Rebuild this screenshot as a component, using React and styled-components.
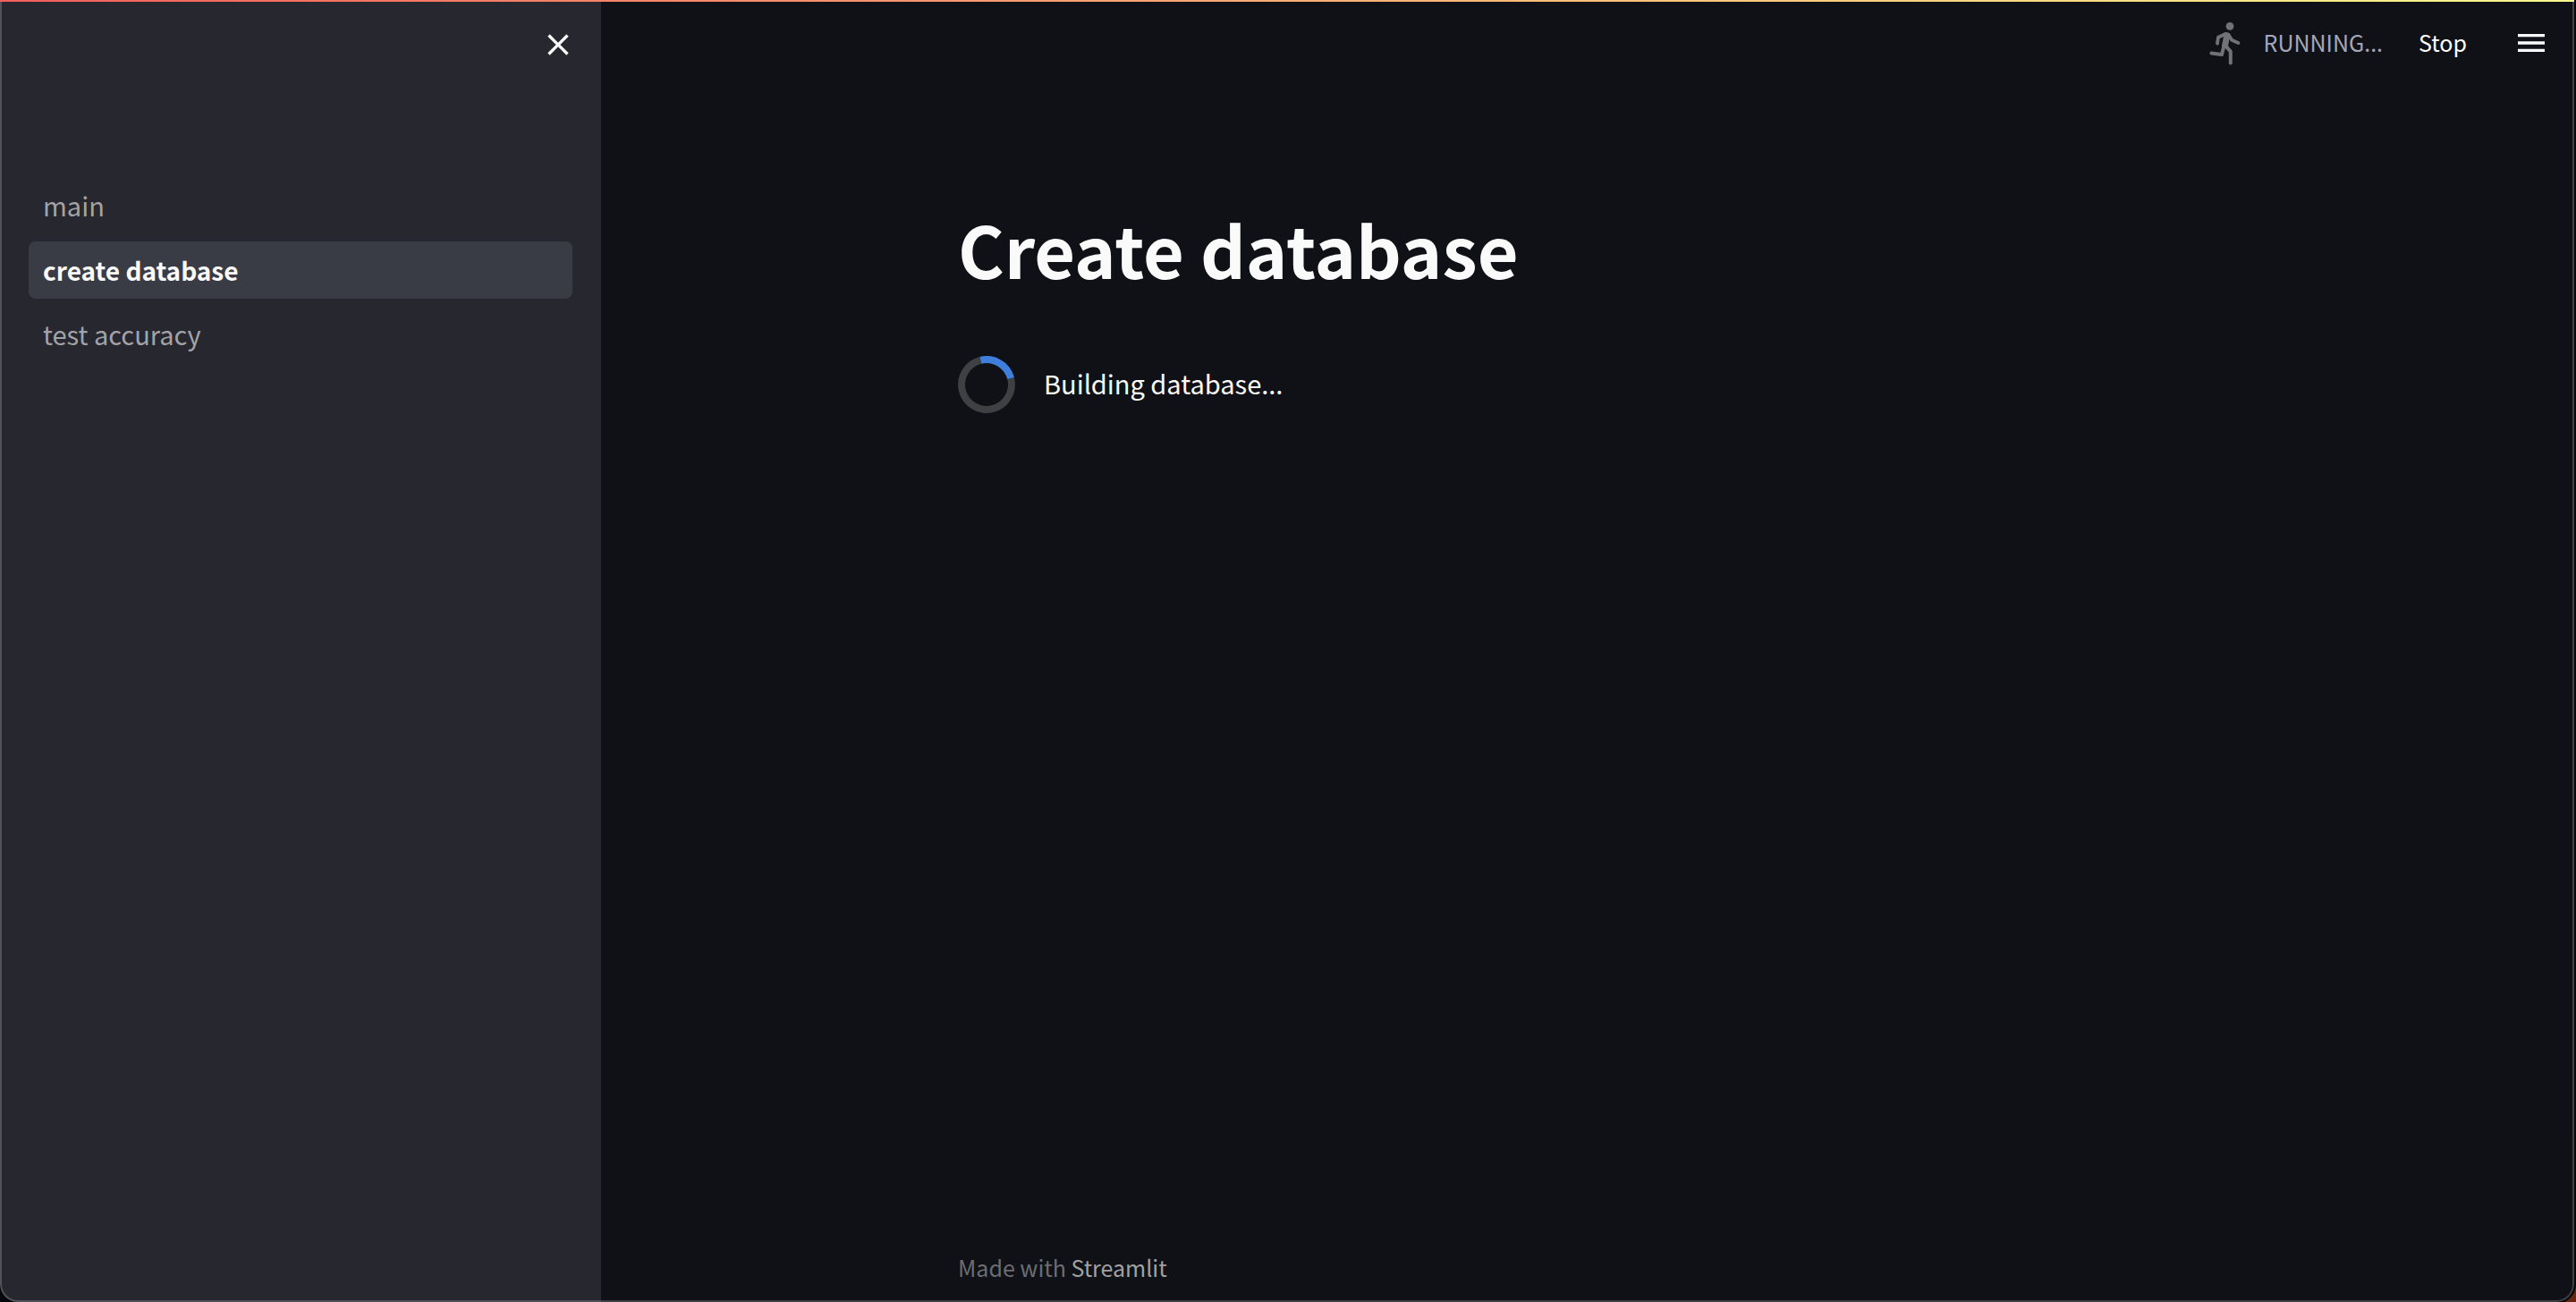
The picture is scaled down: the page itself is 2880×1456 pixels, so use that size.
import React from "react";
import styled, { createGlobalStyle, css } from "styled-components";

const sans = `"Noto Sans CJK SC", "Noto Sans", sans-serif`;

const GlobalStyle = createGlobalStyle`
  *, *::before, *::after { box-sizing: border-box; }
  body { margin: 0; background: #05070a; font-family: ${sans}; color: #fafafa; }
  button { font: inherit; color: inherit; background: none; border: 0; padding: 0; cursor: pointer; }
  a { color: inherit; text-decoration: none; }
`;

const Desktop = styled.div`
  height: 100vh;
  padding-right: 2px;
  overflow: hidden;
  background: linear-gradient(90deg, #05080f 50%, #6a2413 50%);
`;

const Window = styled.div`
  position: relative;
  display: flex;
  height: 100%;
  overflow: hidden;
  border-radius: 0 0 20px 20px;
  background: #0f1116;
  box-shadow: 0 0 0 2px #060608;

  &::after {
    content: "";
    position: absolute;
    inset: 0;
    border: solid rgba(255, 255, 255, 0.2);
    border-width: 0 2px 2px;
    border-radius: inherit;
    pointer-events: none;
  }
`;

const Decoration = styled.div`
  position: absolute;
  z-index: 1;
  inset: 0 0 auto;
  height: 2px;
  background: linear-gradient(90deg, #f35f5c, #fbfa8c);
`;

const Sidebar = styled.aside`
  flex: 0 0 672px;
  background: #272730;
`;

const SidebarHeader = styled.div`
  display: flex;
  justify-content: flex-end;
  height: 198px;
  padding: 30px 28px;
`;

const IconButton = styled.button`
  display: flex;
  width: 40px;
  height: 40px;
`;

const Icon = styled.svg`
  width: 40px;
  height: 40px;
  fill: currentColor;
`;

const NavList = styled.ul`
  display: flex;
  flex-direction: column;
  gap: 8px;
  margin: 0;
  padding: 0 32px;
  list-style: none;
`;

const NavLink = styled.a`
  display: flex;
  align-items: center;
  height: 64px;
  padding: 0 16px 2px;
  border-radius: 8px;
  font-size: 29px;
  color: #a3a3a6;
  ${(p) =>
    p.$active &&
    css`
      padding-bottom: 0;
      background: #3a3c45;
      color: #fafafa;
      font-size: 28px;
      font-weight: 700;
    `}
`;

const Content = styled.div`
  flex: 1;
  display: flex;
  flex-direction: column;
`;

const Header = styled.header`
  display: flex;
  align-items: center;
  justify-content: flex-end;
  height: 96px;
  padding: 0 28px;
`;

const Runner = styled.svg`
  width: 44px;
  height: 56px;
  margin-right: 22px;
  fill: none;
  stroke: #717275;
  stroke-linecap: round;
  stroke-linejoin: round;
`;

const Status = styled.span`
  margin-right: 40px;
  padding-bottom: 2px;
  font-size: 25px;
  color: #a5a7b9;
`;

const StopButton = styled.button`
  margin-right: 52px;
  padding-bottom: 2px;
  font-size: 25px;
  color: #ffffff;
`;

const Main = styled.main`
  flex: 1;
  width: 1408px;
  max-width: 100%;
  margin: 0 auto;
  padding-top: 130px;
`;

const Title = styled.h1`
  margin: 0;
  font-size: 79px;
  font-weight: 700;
  line-height: 104px;
`;

const Loading = styled.div`
  display: flex;
  align-items: center;
  gap: 32px;
  margin-top: 68px;
  font-size: 29px;
  line-height: 60px;
`;

const Message = styled.span`
  padding-bottom: 4px;
`;

const Spinner = styled.div`
  width: 64px;
  height: 64px;
  border: 8px solid #3f4044;
  border-top-color: #3d7fdb;
  border-radius: 50%;
  transform: rotate(31deg);
`;

const Footer = styled.footer`
  width: 1408px;
  max-width: 100%;
  margin: 0 auto;
  padding-bottom: 19px;
  font-size: 25px;
  line-height: 40px;
  color: #6c6d70;
`;

const FooterLink = styled.a`
  color: #a0a1a3;
`;

const pages = ["main", "create database", "test accuracy"];

export default function App() {
  return (
    <Desktop>
      <GlobalStyle />
      <Window>
        <Decoration />
        <Sidebar>
          <SidebarHeader>
            <IconButton type="button" aria-label="Close sidebar">
              <Icon viewBox="0 0 24 24" aria-hidden="true">
                <path d="M19 6.41L17.59 5 12 10.59 6.41 5 5 6.41 10.59 12 5 17.59 6.41 19 12 13.41 17.59 19 19 17.59 13.41 12z" />
              </Icon>
            </IconButton>
          </SidebarHeader>
          <nav>
            <NavList>
              {pages.map((page) => (
                <li key={page}>
                  <NavLink href="#" $active={page === "create database"}>
                    {page}
                  </NavLink>
                </li>
              ))}
            </NavList>
          </nav>
        </Sidebar>
        <Content>
          <Header>
            <Runner viewBox="0 0 44 56" aria-hidden="true">
              <circle cx="28" cy="9.4" r="4.4" fill="#717275" stroke="none" />
              <path d="M24.8 19.6 L22.6 30.6" strokeWidth="7" />
              <path d="M23 18 L15 21.8 L14 28.6" strokeWidth="3.8" />
              <path d="M26.6 19 L30.2 24.8 L37.4 28" strokeWidth="3.8" />
              <path d="M23.4 31.4 L28.8 37.6 V50.4" strokeWidth="4" />
              <path d="M21.4 31.4 L19 41 L7.4 39.4" strokeWidth="4" />
            </Runner>
            <Status role="status">RUNNING...</Status>
            <StopButton type="button">Stop</StopButton>
            <IconButton type="button" aria-label="Menu">
              <Icon viewBox="0 0 24 24" aria-hidden="true">
                <path d="M3 18h18v-2H3v2zm0-5h18v-2H3v2zm0-7v2h18V6H3z" />
              </Icon>
            </IconButton>
          </Header>
          <Main>
            <Title>Create database</Title>
            <Loading>
              <Spinner />
              <Message>Building database...</Message>
            </Loading>
          </Main>
          <Footer>
            Made with <FooterLink href="#">Streamlit</FooterLink>
          </Footer>
        </Content>
      </Window>
    </Desktop>
  );
}
